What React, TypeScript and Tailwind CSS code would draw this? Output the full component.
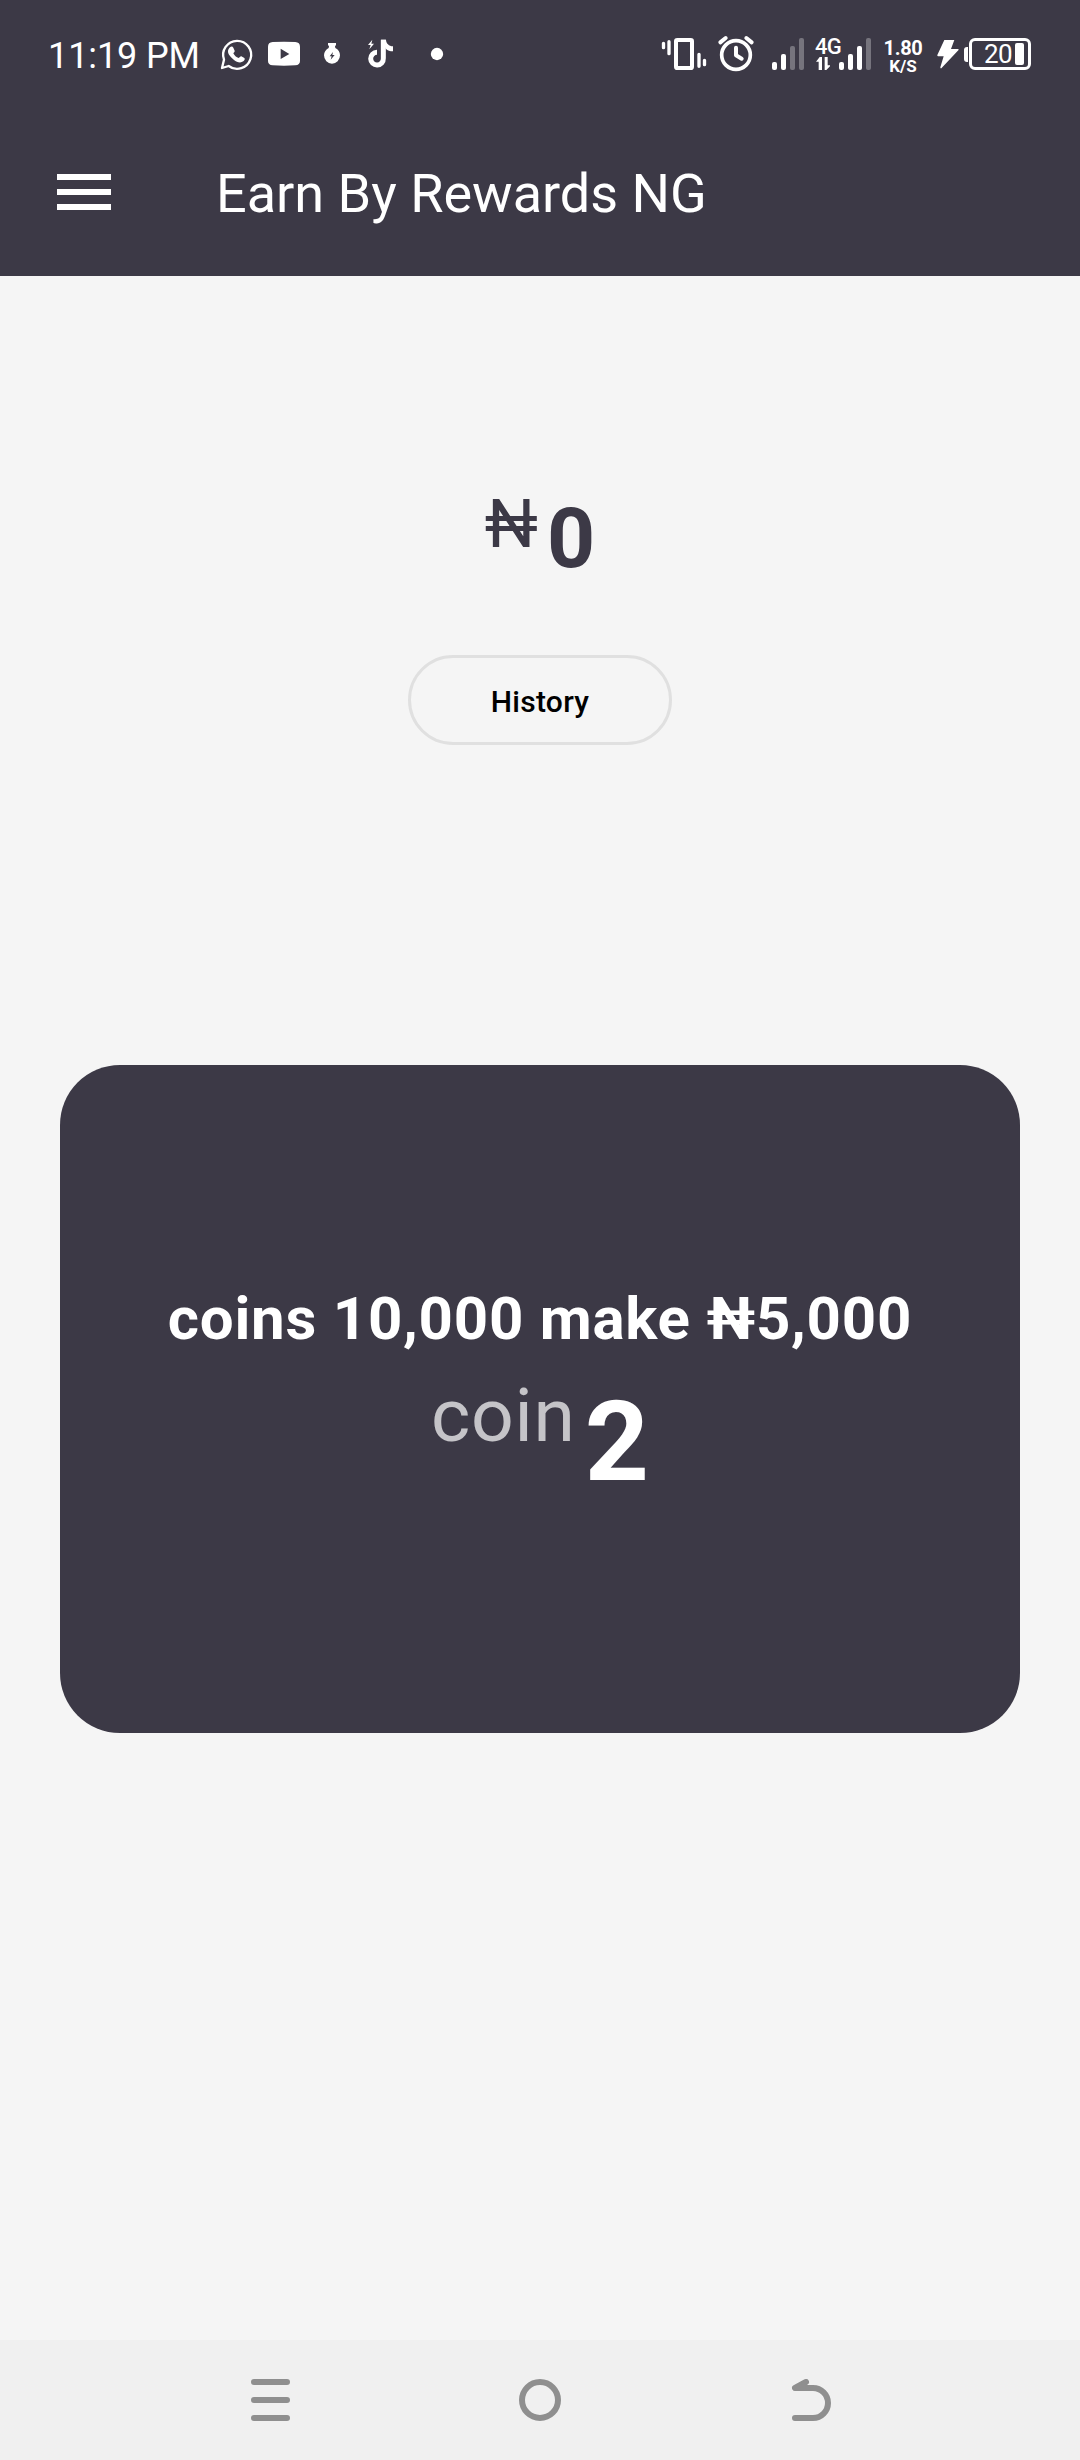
import React from "react";

function StatusLeftIcons() {
  return (
    <svg width="250" height="70" viewBox="0 0 750 210" fill="#fff" className="block shrink-0">
      {/* chat bubble with handset */}
      <path d="M36 144l6-25A42 42 0 1 1 56 138z" fill="none" stroke="#fff" strokeWidth="7" strokeLinejoin="round" />
      <path d="M60 82c3-3 8-3 10 1l4 9c1 3-3 6-4 8 3 7 9 12 16 14 3-1 5-6 8-5l9 5c3 2 0 8-3 10-9 7-20 2-28-4-8-7-19-17-18-27 0-4 3-8 6-11z" />
      {/* video */}
      <path fillRule="evenodd" d="M188 66q34-2 68 0 14 1 14 14v43q0 12-14 13-34 2-68 0-14-1-14-13V80q0-13 14-14zM212 86v31l26-15z" />
      {/* money bag */}
      <path fillRule="evenodd" d="M354 69h24v6l-3 4 1 5c9 4 14 12 14 22a24 25 0 0 1-48 0c0-10 6-18 14-22l1-5-3-4zM369 96l-10 13h6l-3 10 12-14h-7z" />
      {/* music note */}
      <path d="M520 59v56a19 19 0 1 1-19-18" fill="none" stroke="#fff" strokeWidth="15" />
      <path d="M513 59h15c0 11 9 19 21 20v15c-9 0-16-3-21-7z" />
      <path d="M487 59l-13 16h8l-4 13 14-17h-8z" />
      <circle cx="681" cy="102" r="18.500" />
    </svg>
  );
}

function StatusRightIcons() {
  return (
    <svg width="180" height="70" viewBox="0 0 540 210" fill="#fff" className="block shrink-0">
      {/* vibrate */}
      <rect x="78" y="60" width="48" height="84" rx="4" fill="none" stroke="#fff" strokeWidth="12" />
      <path d="M40.500 70v13M57 65v36M147 103v36M163.500 121v13" stroke="#fff" strokeWidth="10" strokeLinecap="round" />
      {/* alarm */}
      <circle cx="258" cy="105" r="43" fill="none" stroke="#fff" strokeWidth="11" />
      <path d="M258 83v23l17 10M211 67l16-13M305 67l-16-13" fill="none" stroke="#fff" strokeWidth="12" strokeLinecap="round" strokeLinejoin="round" />
      {/* signal one */}
      <rect x="366" y="126" width="15" height="24" rx="6" />
      <rect x="393" y="102" width="15" height="48" rx="6" />
      <rect x="420" y="78" width="15" height="72" rx="6" fillOpacity=".3" />
      <rect x="447" y="54" width="15" height="96" rx="6" fillOpacity=".3" />
      {/* data arrows */}
      <path d="M509 111h7v39h-10v-25h-8zM524 111h9v25h10l-14 14h-5z" />
    </svg>
  );
}

function SignalTwo() {
  return (
    <svg width="34" height="70" viewBox="0 0 102 210" fill="#fff" className="block shrink-0">
      <rect x="3" y="126" width="15" height="24" rx="6" />
      <rect x="30" y="102" width="15" height="48" rx="6" />
      <rect x="57" y="78" width="15" height="72" rx="6" />
      <rect x="84" y="54" width="15" height="96" rx="6" fillOpacity=".3" />
    </svg>
  );
}

function StatusBar() {
  return (
    <div className="flex h-[108px] items-start pt-5">
      <div className="mt-[15px] ml-12 w-[162px] whitespace-nowrap text-[36px] leading-[42px] tracking-[-0.1px]">11:19 PM</div>
      <StatusLeftIcons />
      <div className="w-[190px] shrink-0" />
      <StatusRightIcons />
      <div className="relative h-[70px] w-[8px] shrink-0">
        <span className="absolute top-[15px] left-[-15px] text-[22px] leading-6 font-medium tracking-[-0.8px]">4G</span>
      </div>
      <SignalTwo />
      <div className="ml-[9px] flex w-[44px] shrink-0 flex-col items-center pt-[17px] font-bold">
        <span className="text-[20px] leading-[22px] tracking-[-0.3px]">1.80</span>
        <span className="text-[17px] leading-[14px]">K/S</span>
      </div>
      <svg width="26" height="70" viewBox="0 0 78 210" fill="#fff" className="ml-2 block shrink-0">
        <path d="M34 60h30l-10 27h22q2 2 0 4l-51 54q-3 1-3-3l10-33H15q-3-1-2-4z" />
      </svg>
      <div className="mt-[27px] ml-[5px] h-[15px] w-[4px] shrink-0 rounded-l-[3px] bg-white" />
      <div className="mt-[18px] ml-px flex h-8 w-[62px] shrink-0 items-center rounded-[6px] border-[3px] border-white">
        <span className="ml-3 w-[31px] text-[26px] leading-[26px] tracking-[-0.5px]">20</span>
        <span className="h-[22px] w-[9px] rounded-[2px] bg-white" />
      </div>
    </div>
  );
}

export default function App() {
  return (
    <div className="flex h-[2460px] w-[1080px] flex-col overflow-hidden bg-[#f5f5f5] font-['Roboto',sans-serif] text-white">
      <header className="h-[276px] shrink-0 bg-[#3c3946]">
        <StatusBar />
        <div className="flex h-[168px] items-start">
          <button aria-label="Menu" className="mt-[66px] ml-[57px] flex w-[54px] flex-col gap-[9px]">
            <span className="h-1.5 bg-white" />
            <span className="h-1.5 bg-white" />
            <span className="h-1.5 bg-white" />
          </button>
          <h1 className="mt-[54px] ml-[105px] text-[54px] leading-[64px] font-normal">Earn By Rewards NG</h1>
        </div>
      </header>

      <main className="flex flex-1 flex-col items-center">
        <div className="mt-[209px] flex items-start text-[#3c3946]">
          <span className="text-[67px] leading-[78px]">₦</span>
          <span className="mt-[5px] ml-[9px] text-[84px] leading-[98px] font-bold">0</span>
        </div>
        <button className="mt-[67px] h-[90px] w-[264px] rounded-full border-[3px] border-[#e0e0e0] pt-[2px] text-[30px] font-medium tracking-[0.3px] text-black">
          History
        </button>
        <section className="mt-[319.500px] flex h-[668.500px] w-[960px] flex-col items-center rounded-[60px] bg-[#3c3946]">
          <h2 className="mt-[219px] text-[60px] leading-[70px] font-bold tracking-[0.75px]">coins 10,000 make ₦5,000</h2>
          <div className="flex items-start">
            <span className="mt-[17px] text-[75px] leading-[88px] tracking-[0.75px] text-white/70">coin</span>
            <span className="mt-[22px] ml-[9px] text-[112px] leading-[132px] font-bold">2</span>
          </div>
        </section>
      </main>

      <nav className="flex h-[120px] shrink-0 items-center justify-center gap-[228px] bg-[#f0f0f0]">
        <svg width="42" height="42" viewBox="0 0 42 42" stroke="#8f8f8f" strokeWidth="6" strokeLinecap="round" fill="none">
          <path d="M5 3h33M5 21h33M5 39h33" />
        </svg>
        <svg width="42" height="42" viewBox="0 0 42 42" stroke="#8f8f8f" strokeWidth="6" fill="none">
          <circle cx="21" cy="21" r="18" />
        </svg>
        <svg width="42" height="42" viewBox="0 0 42 42" stroke="#8f8f8f" strokeWidth="6" strokeLinecap="round" strokeLinejoin="round" fill="none">
          <path d="M17 3L6 9h18a15 15 0 0 1 0 30H6" />
        </svg>
      </nav>
    </div>
  );
}
